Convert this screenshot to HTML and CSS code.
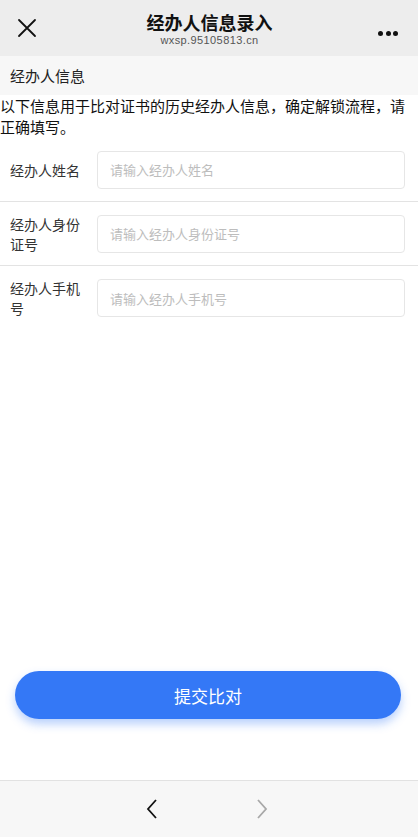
FILE: index.html
```html
<!DOCTYPE html>
<html lang="zh-CN">
<head>
<meta charset="utf-8">
<title>经办人信息录入</title>
<link rel="stylesheet" href="styles.css">
</head>
<body>
<div class="page">
  <header class="navbar">
    <div class="nav-close">
      <svg width="20" height="20" viewBox="0 0 20 20"><path d="M2 2 L18 18 M18 2 L2 18" stroke="#111" stroke-width="1.8" fill="none" stroke-linecap="round"/></svg>
    </div>
    <div class="nav-title">
      <div class="title">经办人信息录入</div>
      <div class="subtitle">wxsp.95105813.cn</div>
    </div>
    <div class="nav-more">
      <span class="dot"></span><span class="dot"></span><span class="dot"></span>
    </div>
  </header>
  <main class="content">
    <div class="section-title">经办人信息</div>
    <p class="intro">以下信息用于比对证书的历史经办人信息，确定解锁流程，请正确填写。</p>
    <div class="form">
      <div class="row">
        <label class="label">经办人姓名</label>
        <input class="field" type="text" placeholder="请输入经办人姓名">
      </div>
      <div class="row">
        <label class="label">经办人身份证号</label>
        <input class="field" type="text" placeholder="请输入经办人身份证号">
      </div>
      <div class="row last">
        <label class="label">经办人手机号</label>
        <input class="field" type="text" placeholder="请输入经办人手机号">
      </div>
    </div>
  </main>
  <div class="actions">
    <button class="submit" type="button">提交比对</button>
  </div>
  <footer class="toolbar">
    <svg class="arrow" width="14" height="22" viewBox="0 0 14 22"><path d="M11 2 L3 11 L11 20" stroke="#111" stroke-width="1.8" fill="none" stroke-linejoin="miter"/></svg>
    <svg class="arrow" width="14" height="22" viewBox="0 0 14 22"><path d="M3 2 L11 11 L3 20" stroke="#a8a8a8" stroke-width="1.8" fill="none" stroke-linejoin="miter"/></svg>
  </footer>
</div>
</body>
</html>
```

FILE: styles.css
```css
* { box-sizing: border-box; }
html, body {
  margin: 0;
  padding: 0;
  background: #fff;
  font-family: "Noto Sans CJK SC", "Noto Sans", "Liberation Sans", sans-serif;
}
.page {
  display: flex;
  flex-direction: column;
  min-height: 837px;
  width: 418px;
}
.navbar {
  height: 56px;
  background: #ededed;
  display: flex;
  align-items: center;
  justify-content: space-between;
  padding: 0 20px 0 17px;
}
.nav-close {
  width: 20px;
  height: 20px;
  display: flex;
}
.nav-title {
  text-align: center;
  display: flex;
  flex-direction: column;
  align-items: center;
  padding-top: 1px;
  margin-left: 4px;
}
.title {
  font-size: 18px;
  font-weight: 700;
  color: #111;
  line-height: 22px;
}
.subtitle {
  font-family: "Liberation Sans", sans-serif;
  font-size: 11px;
  color: #555;
  line-height: 14px;
  letter-spacing: 0.4px;
}
.nav-more {
  display: flex;
  gap: 2.5px;
  padding-top: 10px;
}
.dot {
  width: 5px;
  height: 5px;
  border-radius: 50%;
  background: #111;
}
.content {
  flex: 1;
}
.section-title {
  height: 39px;
  background: #f7f7f7;
  padding-left: 10px;
  font-size: 15px;
  color: #222;
  display: flex;
  align-items: center;
}
.intro {
  margin: 0;
  padding: 0;
  font-size: 15px;
  line-height: 21px;
  color: #111;
  height: 43px;
}
.row {
  display: flex;
  align-items: center;
  min-height: 64px;
  padding: 0 13px 0 10px;
  border-bottom: 1px solid #e3e3e3;
}
.row.last {
  border-bottom: none;
}
.label {
  width: 87px;
  padding-right: 14px;
  font-size: 14px;
  line-height: 20px;
  color: #333;
  flex-shrink: 0;
}
.field {
  flex: 1;
  height: 38px;
  border: 1px solid #e6e6e6;
  border-radius: 4px;
  padding: 0 12px;
  font-family: inherit;
  font-size: 13px;
  color: #333;
  background: #fff;
  outline: none;
}
.field::placeholder {
  color: #bdbdbd;
}
.actions {
  padding: 0 17px 61px 15px;
}
.submit {
  width: 100%;
  height: 48px;
  border: none;
  border-radius: 24px;
  background: #3478f6;
  color: #fff;
  font-family: inherit;
  font-size: 17px;
  box-shadow: 0 5px 10px rgba(52, 120, 246, 0.35);
}
.toolbar {
  height: 57px;
  background: #f7f7f7;
  border-top: 1px solid #e2e2e2;
  display: flex;
  align-items: center;
  justify-content: center;
  gap: 96px;
  padding-right: 4px;
}
.arrow {
  display: block;
}
```
